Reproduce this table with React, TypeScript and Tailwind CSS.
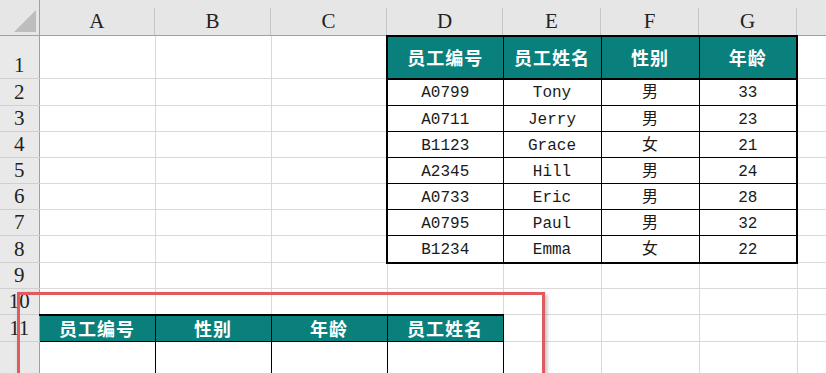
import React from "react";

const colWidths = [39, 116, 116, 116, 116, 98, 98, 98, 29];
const rowHeights = [43, 27, 26, 26, 26, 26, 26, 27, 26, 26, 27, 40];
const letters = ["A", "B", "C", "D", "E", "F", "G", ""];

const dataRows: string[][] = [
  ["A0799", "Tony", "男", "33"],
  ["A0711", "Jerry", "男", "23"],
  ["B1123", "Grace", "女", "21"],
  ["A2345", "Hill", "男", "24"],
  ["A0733", "Eric", "男", "28"],
  ["A0795", "Paul", "男", "32"],
  ["B1234", "Emma", "女", "22"],
];

const topHeaders = ["员工编号", "员工姓名", "性别", "年龄"];
const bottomHeaders = ["员工编号", "性别", "年龄", "员工姓名"];

const headFont = { fontFamily: '"Noto Sans CJK SC", sans-serif' };
const dataFont = { fontFamily: '"Liberation Mono", "Noto Sans CJK SC", monospace' };
const serif = { fontFamily: '"Liberation Serif", serif' };

function Cell({ r, c }: { r: number; c: number }) {
  const h = rowHeights[r - 1];
  if (c >= 3 && c <= 6 && r >= 1 && r <= 8) {
    const idx = c - 3;
    const isHeader = r === 1;
    let cls = "border border-black text-center align-middle p-0 leading-none ";
    if (idx === 0) cls += "border-l-2 ";
    if (idx === 3) cls += "border-r-2 ";
    if (r === 1) cls += "border-t-2 border-b-2 bg-[#0a807c] text-white font-bold text-[18px] tracking-[1px] ";
    if (r === 8) cls += "border-b-2 ";
    if (!isHeader) cls += "text-[16px] text-[#1a1a1a] ";
    return (
      <td className={cls} style={{ height: h, ...(isHeader ? headFont : dataFont) }}>
        <span className={isHeader ? "" : "relative top-[1px]"}>
          {isHeader ? topHeaders[idx] : dataRows[r - 2][idx]}
        </span>
      </td>
    );
  }
  if (c >= 0 && c <= 3 && r >= 11) {
    const isHeader = r === 11;
    let cls = "border border-black text-center align-middle p-0 leading-none ";
    if (isHeader) cls += "border-t-2 bg-[#0a807c] text-white font-bold text-[18px] tracking-[1px] ";
    if (c === 0) cls += "border-l-[#a0a0a0] ";
    return (
      <td className={cls} style={{ height: h, ...headFont }}>
        {isHeader ? bottomHeaders[c] : ""}
      </td>
    );
  }
  return <td className="border border-[#d9d9d9] p-0" style={{ height: h }} />;
}

export default function App() {
  return (
    <div className="relative w-[826px] h-[373px] overflow-hidden bg-white">
      <table className="table-fixed border-collapse w-[826px]">
        <colgroup>
          {colWidths.map((w, i) => (
            <col key={i} style={{ width: w }} />
          ))}
        </colgroup>
        <thead>
          <tr>
            <th className="p-0 bg-[#e6e6e6] border-b border-r border-[#a0a0a0] h-[35px] align-bottom">
              <div className="flex h-[35px] items-end justify-end pr-[3px] pb-[3px]">
                <svg width="22" height="22" viewBox="0 0 22 22">
                  <polygon points="22,0 22,22 0,22" fill="#bdbdbd" />
                </svg>
              </div>
            </th>
            {letters.map((l, i) => (
              <th key={i} className="p-0 bg-[#e6e6e6] border-b border-[#a0a0a0] h-[35px] align-bottom font-normal">
                <div
                  className={
                    "h-[27px] flex items-center justify-center text-[21px] text-[#222] leading-none " +
                    (i < 7 ? "border-r border-[#c6c6c6]" : "")
                  }
                  style={serif}
                >
                  {l}
                </div>
              </th>
            ))}
          </tr>
        </thead>
        <tbody>
          {rowHeights.map((h, ri) => {
            const r = ri + 1;
            return (
              <tr key={r}>
                <td
                  className="p-0 bg-[#e9e9e9] border-r border-r-[#a0a0a0] border-b border-b-[#d0d0d0] text-center align-bottom text-[21px] leading-none text-[#222]"
                  style={{ height: h, ...serif }}
                >
                  <div className="pb-[2px]">{r < 12 ? r : ""}</div>
                </td>
                {letters.map((_, c) => (
                  <Cell key={c} r={r} c={c} />
                ))}
              </tr>
            );
          })}
        </tbody>
      </table>
      <div className="absolute left-[17px] top-[292px] w-[528px] h-[120px] border-[3px] border-[#e05a5e] shadow-[2px_2px_4px_rgba(0,0,0,0.25)]" />
    </div>
  );
}
